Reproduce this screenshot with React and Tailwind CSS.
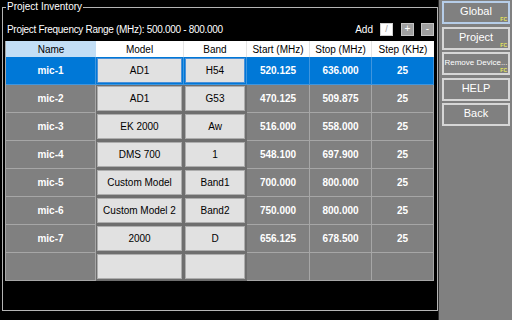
import React from 'react';

const rows = [
  { name: 'mic-1', model: 'AD1', band: 'H54', start: '520.125', stop: '636.000', step: '25', selected: true },
  { name: 'mic-2', model: 'AD1', band: 'G53', start: '470.125', stop: '509.875', step: '25' },
  { name: 'mic-3', model: 'EK 2000', band: 'Aw', start: '516.000', stop: '558.000', step: '25' },
  { name: 'mic-4', model: 'DMS 700', band: '1', start: '548.100', stop: '697.900', step: '25' },
  { name: 'mic-5', model: 'Custom Model', band: 'Band1', start: '700.000', stop: '800.000', step: '25' },
  { name: 'mic-6', model: 'Custom Model 2', band: 'Band2', start: '750.000', stop: '800.000', step: '25' },
  { name: 'mic-7', model: '2000', band: 'D', start: '656.125', stop: '678.500', step: '25' },
  { name: '', model: '', band: '', start: '', stop: '', step: '' },
];

const sideButtons = [
  { label: 'Global', fc: true, focused: true },
  { label: 'Project', fc: true },
  { label: 'Remove Device...', fc: true, small: true },
  { label: 'HELP' },
  { label: 'Back' },
];

const Cell = ({ children, selected }) => (
  <div
    className={`h-[28px] flex items-center justify-center border-r border-b font-bold text-white ${
      selected ? 'bg-[#0078d7] border-[#3f95de]' : 'bg-[#808080] border-[#a6a6a6]'
    }`}
  >
    {children}
  </div>
);

const ButtonCell = ({ children, selected }) => (
  <div
    className={`h-[28px] flex items-stretch border-r border-b p-[1px] ${
      selected ? 'bg-[#0078d7] border-[#3f95de]' : 'bg-[#6e6e6e] border-[#6e6e6e]'
    }`}
  >
    <div
      className={`flex-1 flex items-center justify-center bg-[#e1e1e1] text-black border ${
        selected ? 'border-[#4a90d9]' : 'border-[#adadad]'
      }`}
    >
      {children}
    </div>
  </div>
);

export default function App() {
  return (
    <div className="w-[512px] h-[320px] flex bg-black overflow-hidden font-['Liberation_Sans',sans-serif] text-[10px]">
      {/* Main panel */}
      <div className="w-[438px] h-full pl-[2px] pt-[7px]">
        <div className="relative w-[436px] h-[304px] border border-[#b4b4b4] pl-[2px]">
          <span className="absolute left-[3px] -top-[7px] bg-black px-[1px] text-white text-[10px] leading-[12px]">
            Project Inventory
          </span>

          {/* Range + Add */}
          <div className="mt-[14px] mb-[5px] h-[14px] flex items-center justify-between pr-[3px] text-white">
            <span className="pl-[2px] tracking-[-0.3px]">Project Frequency Range (MHz): 500.000 - 800.000</span>
            <div className="flex items-center">
              <span className="mr-[7px]">Add</span>
              <div className="w-[13px] h-[13px] bg-white border border-[#d0d0d0] flex items-center justify-center text-[#9a9a9a] text-[9px] leading-none mr-[8px]">
                /
              </div>
              <div className="w-[13px] h-[13px] bg-[#a0a0a0] border border-[#c4c4c4] flex items-center justify-center text-white text-[10px] leading-none mr-[7px]">
                +
              </div>
              <div className="w-[13px] h-[13px] bg-[#a0a0a0] border border-[#c4c4c4] flex items-center justify-center text-white text-[10px] leading-none">
                -
              </div>
            </div>
          </div>

          {/* Table */}
          <div className="w-[428px] grid grid-cols-[90px_88px_63px_63px_62px_62px] border-l border-[#a6a6a6]">
            <div className="h-[16px] flex items-center justify-center bg-[#c2def5] text-black">Name</div>
            <div className="h-[16px] flex items-center justify-center bg-white text-black border-r border-[#e4e4e4]">Model</div>
            <div className="h-[16px] flex items-center justify-center bg-white text-black border-r border-[#e4e4e4]">Band</div>
            <div className="h-[16px] flex items-center justify-center bg-white text-black border-r border-[#e4e4e4]">Start (MHz)</div>
            <div className="h-[16px] flex items-center justify-center bg-white text-black border-r border-[#e4e4e4]">Stop (MHz)</div>
            <div className="h-[16px] flex items-center justify-center bg-white text-black">Step (KHz)</div>

            {rows.map((r, i) => (
              <React.Fragment key={i}>
                <Cell selected={r.selected}>{r.name}</Cell>
                <ButtonCell selected={r.selected}>{r.model}</ButtonCell>
                <ButtonCell selected={r.selected}>{r.band}</ButtonCell>
                <Cell selected={r.selected}>{r.start}</Cell>
                <Cell selected={r.selected}>{r.stop}</Cell>
                <Cell selected={r.selected}>{r.step}</Cell>
              </React.Fragment>
            ))}
          </div>
        </div>
      </div>

      {/* Side bar */}
      <div className="flex-1 h-full bg-[#808080] border-l border-[#2e2e2e] pl-[3px] pr-[2px] pt-[1px] flex flex-col gap-[2.5px]">
        {sideButtons.map((b) => (
          <div
            key={b.label}
            className={`relative h-[23px] flex items-center justify-center text-white border-2 ${
              b.focused ? 'border-[#b6cde8]' : 'border-[#d6d6d6]'
            } ${b.small ? 'text-[8px]' : 'text-[11px]'}`}
          >
            <span className="-mt-[2px]">{b.label}</span>
            {b.fc && (
              <span className="absolute right-[1px] bottom-0 text-[5px] leading-[6px] font-bold text-[#e6e65a]">FC</span>
            )}
          </div>
        ))}
      </div>
    </div>
  );
}
